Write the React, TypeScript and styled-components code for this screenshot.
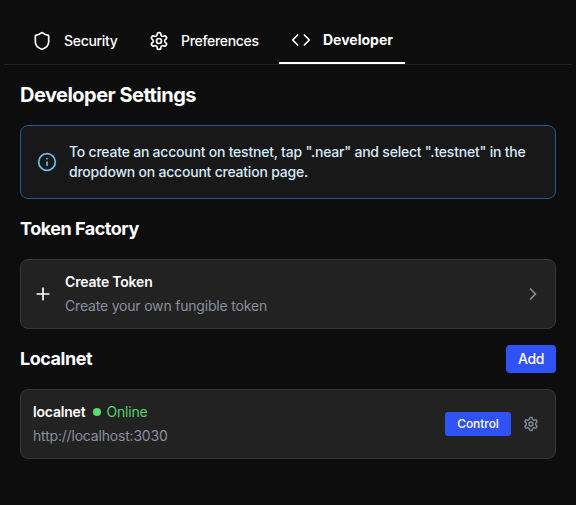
import React from "react";
import styled, { createGlobalStyle } from "styled-components";
import { Shield, Code, Info, Plus, ChevronRight } from "lucide-react";

const GlobalStyle = createGlobalStyle`
  *, *::before, *::after { box-sizing: border-box; }
  body {
    margin: 0;
    background: #0d0d0d;
    color: #fff;
    font-family: Inter, "Liberation Sans", sans-serif;
    font-size: 14px;
    line-height: 20px;
    letter-spacing: -0.19px;
  }
`;

const Page = styled.main`
  height: 505px;
  padding: 16px 4px 0;
  overflow: hidden;
`;

const TabBar = styled.nav`
  display: flex;
  height: 49px;
  padding-left: 14px;
  border-bottom: 1px solid #222;
`;

const Tab = styled.button<{ $active?: boolean; $width: number }>`
  display: flex;
  align-items: center;
  gap: 12px;
  width: ${(p) => p.$width}px;
  height: 48px;
  padding: ${(p) => (p.$active ? "2px 0 0 12px" : "2px 0 0 14px")};
  border: 0;
  border-bottom: ${(p) => (p.$active ? "2px solid #fff" : "0")};
  background: none;
  color: #fff;
  font: inherit;
  font-weight: ${(p) => (p.$active ? 700 : 450)};
  letter-spacing: ${(p) => (p.$active ? "0" : "-0.32px")};
  white-space: nowrap;
`;

const Content = styled.div`
  padding: 16px 16px 0;
`;

const Heading = styled.h2<{ $large?: boolean }>`
  margin: 0;
  font-size: ${(p) => (p.$large ? 20 : 18)}px;
  line-height: 28px;
  font-weight: 650;
  letter-spacing: ${(p) => (p.$large ? -0.52 : -0.48)}px;
`;

const HeadingRow = styled.div`
  display: flex;
  align-items: center;
  justify-content: space-between;
  height: 28px;
  margin: 16px 0;
`;

const Notice = styled.div`
  display: flex;
  align-items: center;
  gap: 12px;
  height: 74px;
  margin-top: 16px;
  padding: 0 16px;
  border: 1px solid #1e5a94;
  border-radius: 8px;
  background: #181818;
  color: #d6eafa;
  font-weight: 450;
  letter-spacing: -0.22px;
  svg { flex: none; color: #6cbcf2; }
`;

const Card = styled.section`
  display: flex;
  align-items: center;
  height: 70px;
  padding: 0 12px;
  border: 1px solid #363636;
  border-radius: 8px;
  background: #222;
`;

const CardIcon = styled.span`
  display: flex;
  width: 32px;
`;

const CardBody = styled.div`
  display: flex;
  flex: 1;
  flex-direction: column;
  gap: 4px;
`;

const CardTitle = styled.div`
  display: flex;
  align-items: center;
  font-weight: 575;
`;

const CardText = styled.div`
  color: #8a8f9f;
  font-weight: 440;
`;

const Status = styled.span`
  display: flex;
  align-items: center;
  gap: 5px;
  margin-left: 8px;
  color: #55d368;
  font-weight: 430;
  &::before {
    content: "";
    width: 8px;
    height: 8px;
    border-radius: 50%;
    background: #5bdc70;
  }
`;

const Button = styled.button<{ $small?: boolean }>`
  display: flex;
  align-items: center;
  justify-content: center;
  width: ${(p) => (p.$small ? 66 : 50)}px;
  height: ${(p) => (p.$small ? 24 : 28)}px;
  padding: 0;
  border: 0;
  border-radius: ${(p) => (p.$small ? 3 : 4)}px;
  background: #3052f5;
  color: #fff;
  font: inherit;
  font-size: ${(p) => (p.$small ? 12 : 14)}px;
  font-weight: 500;
  letter-spacing: ${(p) => (p.$small ? "-0.05px" : "-0.3px")};
`;

const Trailing = styled.span<{ $inset: number }>`
  display: flex;
  color: #8a8f9f;
  margin: 0 ${(p) => p.$inset}px 0 12px;
`;

function Gear({ size }: { size: number }) {
  return (
    <svg
      width={size}
      height={size}
      viewBox="0 0 24 24"
      fill="none"
      stroke="currentColor"
      strokeWidth={2}
      strokeLinecap="round"
      strokeLinejoin="round"
    >
      <path d="M12.22 2h-.44a2 2 0 0 0-2 2v.18a2 2 0 0 1-1 1.73l-.43.25a2 2 0 0 1-2 0l-.15-.08a2 2 0 0 0-2.73.73l-.22.38a2 2 0 0 0 .73 2.73l.15.1a2 2 0 0 1 1 1.72v.51a2 2 0 0 1-1 1.74l-.15.09a2 2 0 0 0-.73 2.73l.22.38a2 2 0 0 0 2.73.73l.15-.08a2 2 0 0 1 2 0l.43.25a2 2 0 0 1 1 1.73V20a2 2 0 0 0 2 2h.44a2 2 0 0 0 2-2v-.18a2 2 0 0 1 1-1.73l.43-.25a2 2 0 0 1 2 0l.15.08a2 2 0 0 0 2.73-.73l.22-.39a2 2 0 0 0-.73-2.73l-.15-.08a2 2 0 0 1-1-1.74v-.5a2 2 0 0 1 1-1.74l.15-.09a2 2 0 0 0 .73-2.73l-.22-.38a2 2 0 0 0-2.73-.73l-.15.08a2 2 0 0 1-2 0l-.43-.25a2 2 0 0 1-1-1.73V4a2 2 0 0 0-2-2z" />
      <circle cx="12" cy="12" r="3" />
    </svg>
  );
}

export default function App() {
  return (
    <>
      <GlobalStyle />
      <Page>
        <TabBar>
          <Tab $width={117}><Shield size={20} />Security</Tab>
          <Tab $width={144}><Gear size={20} />Preferences</Tab>
          <Tab $width={126} $active><Code size={20} />Developer</Tab>
        </TabBar>
        <Content>
          <Heading $large>Developer Settings</Heading>
          <Notice>
            <Info size={20} />
            <span>
              To create an account on testnet, tap ".near" and select ".testnet" in the
              dropdown on account creation page.
            </span>
          </Notice>
          <HeadingRow><Heading>Token Factory</Heading></HeadingRow>
          <Card>
            <CardIcon><Plus size={20} /></CardIcon>
            <CardBody>
              <CardTitle>Create Token</CardTitle>
              <CardText>Create your own fungible token</CardText>
            </CardBody>
            <Trailing $inset={0}><ChevronRight size={20} /></Trailing>
          </Card>
          <HeadingRow><Heading>Localnet</Heading><Button>Add</Button></HeadingRow>
          <Card>
            <CardBody>
              <CardTitle>localnet<Status>Online</Status></CardTitle>
              <CardText>http://localhost:3030</CardText>
            </CardBody>
            <Button $small>Control</Button>
            <Trailing $inset={4}><Gear size={16} /></Trailing>
          </Card>
        </Content>
      </Page>
    </>
  );
}
